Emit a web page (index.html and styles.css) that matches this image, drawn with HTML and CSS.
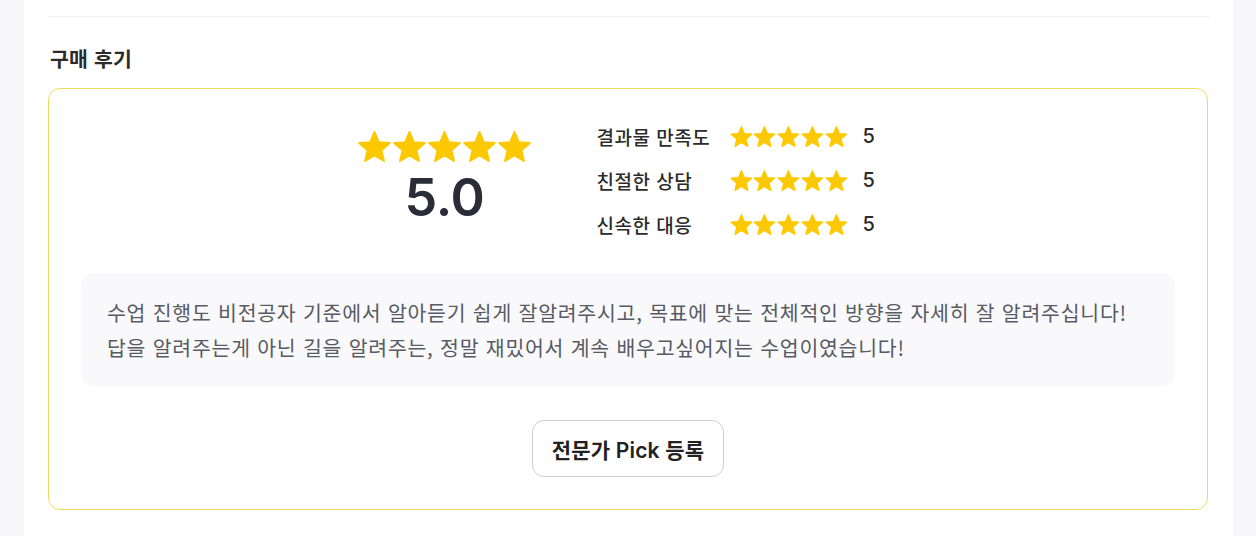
FILE: index.html
```html
<!DOCTYPE html>
<html lang="ko">
<head>
<meta charset="utf-8">
<title>구매 후기</title>
<link rel="stylesheet" href="styles.css">
</head>
<body>
<svg width="0" height="0" class="defs" aria-hidden="true">
  <defs>
    <symbol id="star" viewBox="1.4 1.4 21.2 20.2">
      <path d="M12 17.27L18.18 21l-1.64-7.03L22 9.24l-7.19-.61L12 2 9.19 8.63 2 9.24l5.46 4.73L5.82 21z" fill="#fcc800" stroke="#fcc800" stroke-width="1.2" stroke-linejoin="round"/>
    </symbol>
  </defs>
</svg>
<div class="page">
  <div class="divider"></div>
  <h2 class="title">구매 후기</h2>
  <div class="box">
    <div class="summary">
      <div class="overall">
        <div class="stars big">
          <svg><use href="#star"/></svg><svg><use href="#star"/></svg><svg><use href="#star"/></svg><svg><use href="#star"/></svg><svg><use href="#star"/></svg>
        </div>
        <div class="score">5.0</div>
      </div>
      <div class="rows">
        <div class="row">
          <span class="label">결과물 만족도</span>
          <span class="stars small"><svg><use href="#star"/></svg><svg><use href="#star"/></svg><svg><use href="#star"/></svg><svg><use href="#star"/></svg><svg><use href="#star"/></svg></span>
          <span class="num">5</span>
        </div>
        <div class="row">
          <span class="label">친절한 상담</span>
          <span class="stars small"><svg><use href="#star"/></svg><svg><use href="#star"/></svg><svg><use href="#star"/></svg><svg><use href="#star"/></svg><svg><use href="#star"/></svg></span>
          <span class="num">5</span>
        </div>
        <div class="row">
          <span class="label">신속한 대응</span>
          <span class="stars small"><svg><use href="#star"/></svg><svg><use href="#star"/></svg><svg><use href="#star"/></svg><svg><use href="#star"/></svg><svg><use href="#star"/></svg></span>
          <span class="num">5</span>
        </div>
      </div>
    </div>
    <div class="review">
      <p>수업 진행도 비전공자 기준에서 알아듣기 쉽게 잘알려주시고, 목표에 맞는 전체적인 방향을 자세히 잘 알려주십니다!<br>답을 알려주는게 아닌 길을 알려주는, 정말 재밌어서 계속 배우고싶어지는 수업이였습니다!</p>
    </div>
    <div class="actions">
      <button class="pick">전문가 Pick 등록</button>
    </div>
  </div>
</div>
</body>
</html>
```

FILE: styles.css
```css
* { box-sizing: border-box; }
html, body { margin: 0; padding: 0; }
body {
  background: #f7f7f9;
  font-family: Inter, "Noto Sans CJK KR", sans-serif;
  color: #2a2c36;
}
.defs { position: absolute; }
.page {
  margin: 0 23px 0 24px;
  background: #fff;
  height: 536px;
  padding: 0 24px;
}
.divider {
  height: 17px;
  border-bottom: 1px solid #f0f0f2;
}
.title {
  margin: 27px 0 0 2px;
  font-size: 20.5px;
  line-height: 28px;
  font-weight: 600;
  color: #2b2b2b;
  letter-spacing: 0.2px;
  font-family: "Noto Sans CJK KR", sans-serif;
}
.box {
  margin-top: 16px;
  width: 1160px;
  border: 1px solid #f0dc5c;
  border-radius: 12px;
  padding: 25px 32px 32px;
}
.summary {
  display: flex;
  justify-content: center;
  align-items: center;
  gap: 65px;
}
.overall {
  display: flex;
  flex-direction: column;
  align-items: center;
  width: 174px;
}
.stars { display: flex; }
.stars.big { gap: 2px; }
.stars.big svg { width: 33px; height: 31px; }
.score {
  font-family: Inter, sans-serif;
  font-size: 52px;
  font-weight: 600;
  line-height: 62px;
  margin-top: 5px;
  color: #2a2c38;
  letter-spacing: -0.3px;
}
.rows { display: flex; flex-direction: column; }
.row {
  display: flex;
  align-items: center;
  height: 44px;
}
.label {
  width: 133px;
  font-family: "Noto Sans CJK KR", sans-serif;
  font-size: 19px;
  font-weight: 500;
  color: #2b2b2b;
  letter-spacing: 0.5px;
}
.stars.small { gap: 1px; width: 118px; }
.stars.small svg { width: 22.8px; height: 21px; }
.num {
  width: 36px;
  margin-left: 15px;
  font-family: Inter, sans-serif;
  font-size: 20px;
  font-weight: 500;
  color: #2b2b2b;
}
.review {
  margin-top: 27px;
  background: #f9f9fb;
  border-radius: 12px;
  padding: 22px 26px 21px;
}
.review p {
  margin: 0;
  font-family: "Noto Sans CJK KR", sans-serif;
  font-size: 20.5px;
  line-height: 35px;
  letter-spacing: 0.75px;
  color: #585b63;
}
.actions {
  display: flex;
  justify-content: center;
  margin-top: 34px;
}
.pick {
  width: 192px;
  height: 57px;
  border: 1px solid #cfcfd3;
  border-radius: 12px;
  background: #fff;
  font-family: Inter, "Noto Sans CJK KR", sans-serif;
  font-size: 21px;
  font-weight: 600;
  letter-spacing: 0.2px;
  color: #222;
  padding: 0;
}
```
